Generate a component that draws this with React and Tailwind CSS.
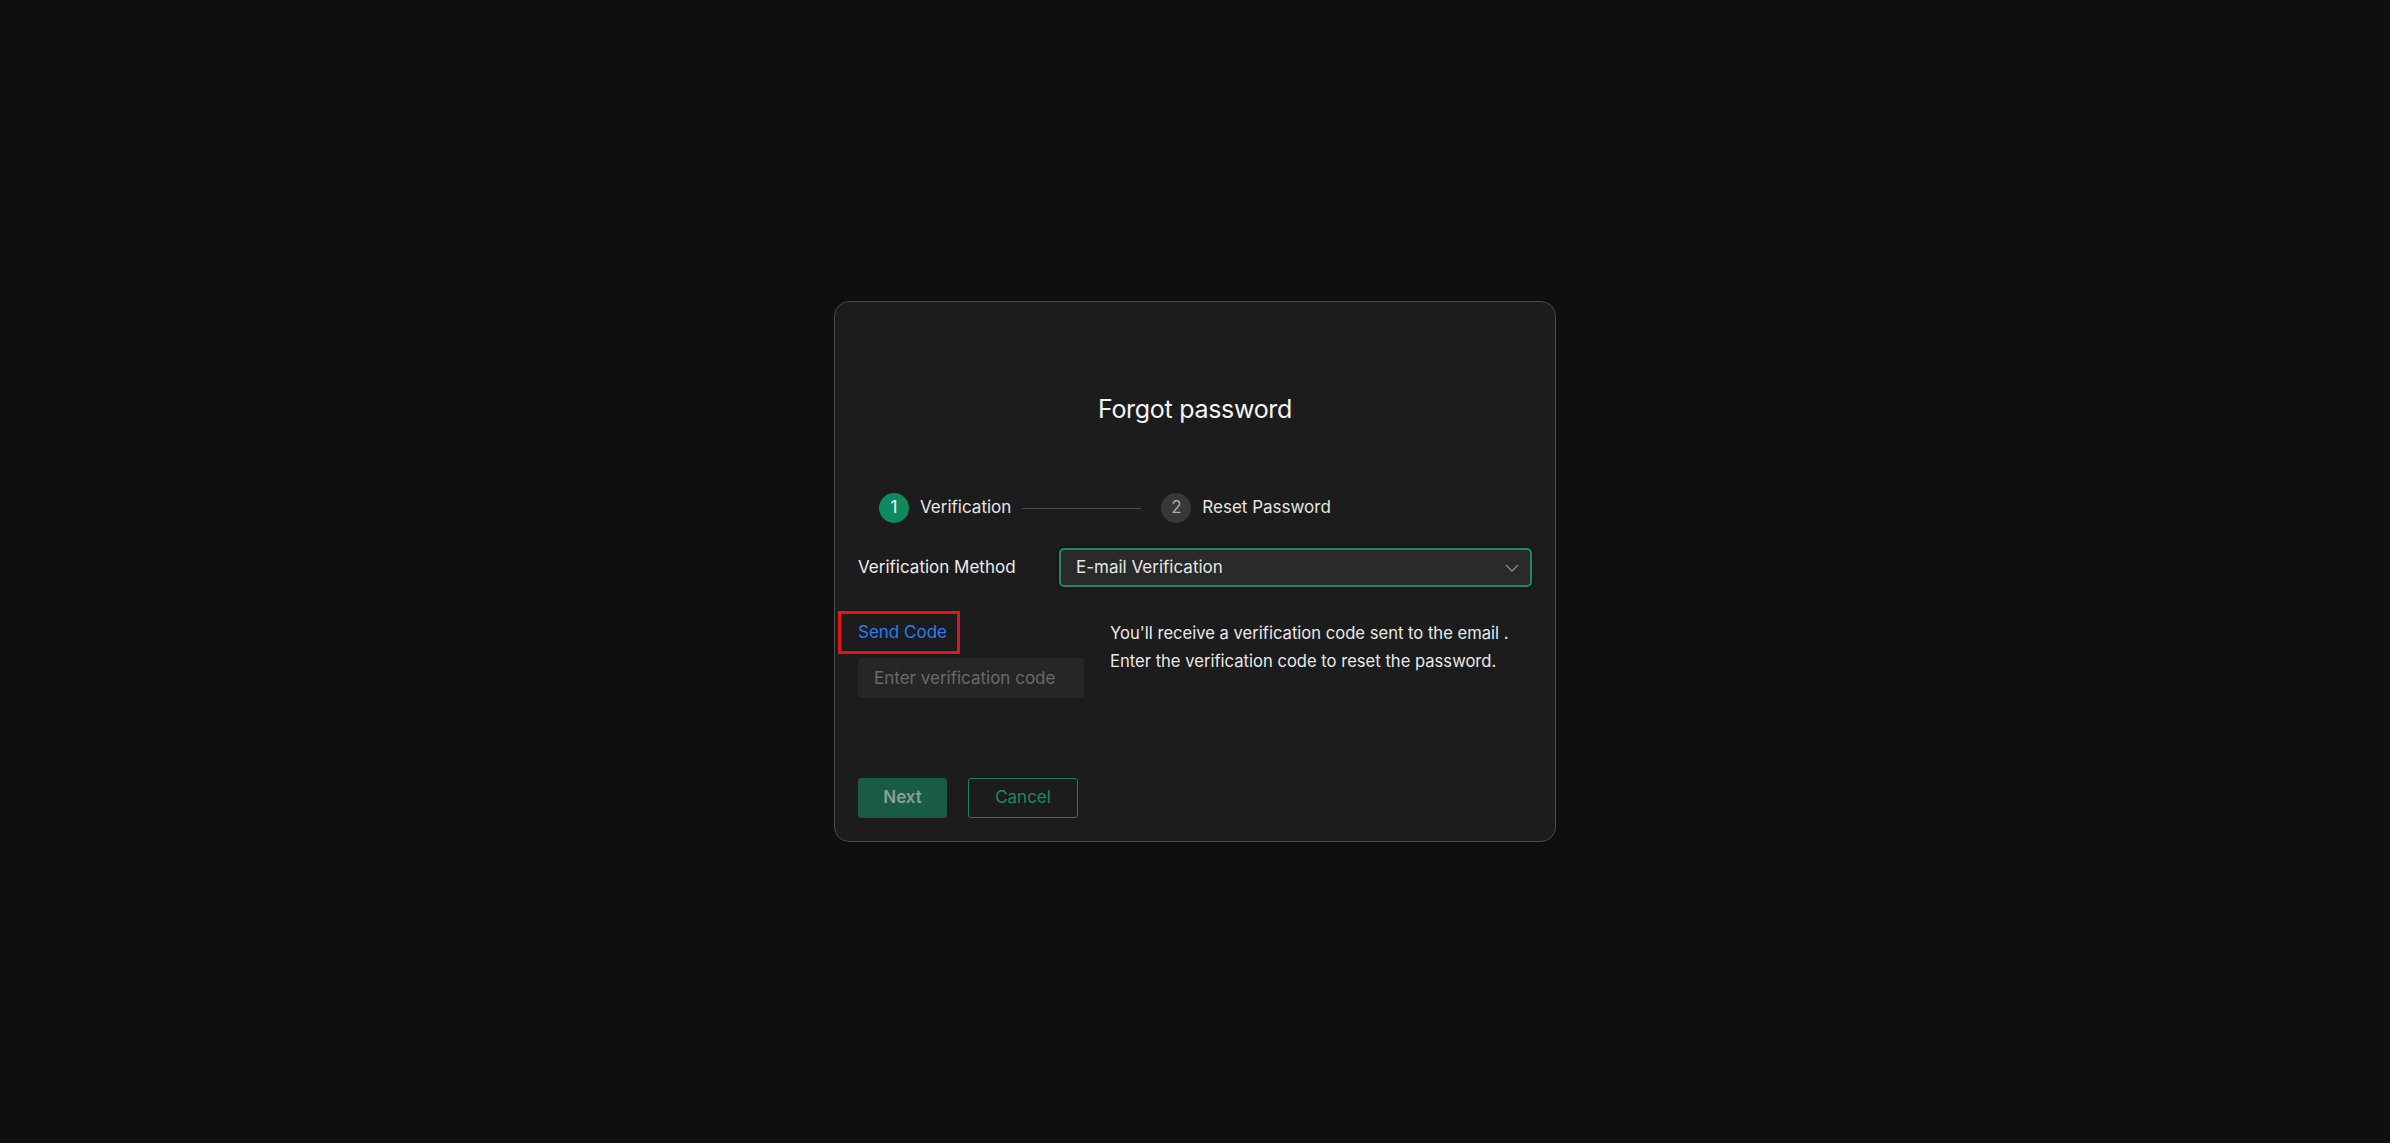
import React from "react";

export default function App() {
  return (
    <div
      className="w-full h-screen bg-[#0f0f0f] flex items-center justify-center"
      style={{ fontFamily: "Inter, 'Noto Sans', sans-serif" }}
    >
      <div className="w-[722px] h-[541px] rounded-[15px] border border-[#4a4a4a] bg-[#1c1c1c] px-[23px] pt-[91px] flex flex-col">
        <h1 className="text-center text-[25px] leading-[32px] text-[#f4f4f4] font-normal tracking-[-0.3px]">
          Forgot password
        </h1>

        <div className="mt-[68px] ml-[21px] flex items-center h-[30px]">
          <div className="w-[30px] h-[30px] rounded-full bg-[#0f8a5e] flex items-center justify-center text-[17px] text-white">
            1
          </div>
          <span className="ml-[11px] text-[17px] text-[#e6e6e6]">Verification</span>
          <div className="ml-[11px] w-[119px] h-px bg-[#4a4a4a]" />
          <div className="ml-[20px] w-[30px] h-[30px] rounded-full bg-[#383838] flex items-center justify-center text-[17px] text-[#a8a8a8]">
            2
          </div>
          <span className="ml-[11px] text-[17px] text-[#e6e6e6]">Reset Password</span>
        </div>

        <div className="mt-[25px] flex items-center">
          <div className="w-[201px] text-[17px] text-[#ececec]">Verification Method</div>
          <div className="flex-1 h-[39px] rounded-[5px] border-2 border-[#1f8a5f] bg-[#2a2a2a] flex items-center justify-between pl-[15px] pr-[11px] shadow-[0_0_3px_rgba(0,0,0,0.6)]">
            <span className="text-[17px] text-[#e6e6e6]">E-mail Verification</span>
            <svg width="14" height="8" viewBox="0 0 14 8" fill="none">
              <path d="M1 1 L7 7 L13 1" stroke="#8a8a8a" strokeWidth="1.3" />
            </svg>
          </div>
        </div>

        <div className="mt-[24px] flex">
          <div className="w-[226px] flex flex-col">
            <div className="relative h-[43px] flex items-center">
              <span className="text-[17px] text-[#2b7cf0]">Send Code</span>
              <div className="absolute left-[-20px] top-0 w-[122px] h-[43px] border-[3px] border-[#e0161b]" />
            </div>
            <input
              className="mt-[4px] h-[40px] w-[226px] rounded-[4px] bg-[#262626] pl-[16px] text-[17px] text-[#e6e6e6] placeholder-[#6a6a6a] outline-none"
              placeholder="Enter verification code"
            />
          </div>
          <div className="ml-[26px] pt-[8px] text-[16.6px] leading-[28px] text-[#e8e8e8]">
            <p>You'll receive a verification code sent to the email .</p>
            <p>Enter the verification code to reset the password.</p>
          </div>
        </div>

        <div className="mt-[80px] flex items-center">
          <button className="w-[89px] h-[40px] rounded-[4px] bg-[#175c43] text-[17px] font-semibold text-[#8d9e95]">
            Next
          </button>
          <button className="ml-[21px] w-[110px] h-[40px] rounded-[3px] border border-[#1f7f58] text-[17px] text-[#1e8a5f]">
            Cancel
          </button>
        </div>
      </div>
    </div>
  );
}
